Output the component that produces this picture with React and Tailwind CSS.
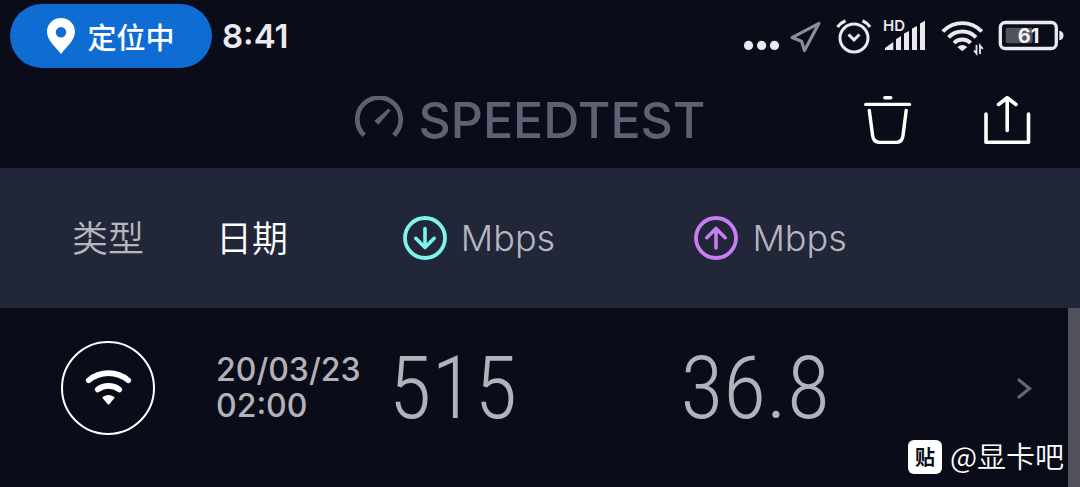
import React from 'react';

const StatusIcon = ({ viewBox, className, label, children }) => (
    <svg viewBox={viewBox} className={`h-9 overflow-visible ${className}`} fill="none" stroke="#e9e9ee" role="img" aria-label={label}>
        {children}
    </svg>
);

const StatusBar = () => (
    <div className="flex h-18 items-center justify-between pr-4 pl-2.5">
        <div className="flex items-center gap-2.5">
            <div className="flex h-16 w-[202px] items-center justify-center gap-3 rounded-full bg-[#0e6cd2] text-white">
                <svg viewBox="0 0 28 36" className="h-9 w-7" fill="#ffffff" aria-hidden="true">
                    <path fillRule="evenodd" d="M14 0C6.200 0 0 6 0 13.800C0 22 7.500 28 14 36C20.500 28 28 22 28 13.800C28 6 21.800 0 14 0ZM14 9A5.200 5.200 0 1 1 14 19.400A5.200 5.200 0 1 1 14 9Z" />
                </svg>
                <span className="font-['Noto_Sans_CJK_SC',sans-serif] text-[29px] leading-9 font-medium">定位中</span>
            </div>
            <time className="text-[33px] leading-10 font-semibold text-[#e9e9ee]">8:41</time>
        </div>

        <div className="flex items-center gap-3">
            <StatusIcon viewBox="742 18 36 36" className="w-9" label="More">
                <g fill="#e9e9ee" stroke="none">
                    <circle cx="748.5" cy="45.400" r="4.600" />
                    <circle cx="761.600" cy="45.400" r="4.600" />
                    <circle cx="774.500" cy="45.400" r="4.600" />
                </g>
            </StatusIcon>
            <StatusIcon viewBox="790 18 34 36" className="w-[34px]" label="Location">
                <path d="M819 23.300L792 37.600L801.500 41.300L804.500 50.500Z" stroke="#8c8c96" strokeWidth="3.200" strokeLinejoin="round" />
            </StatusIcon>
            <StatusIcon viewBox="836 18 34 36" className="w-[34px]" label="Alarm">
                <circle cx="854" cy="38" r="14" strokeWidth="3" />
                <path d="M837.500 27Q840.500 23 845.500 20.800M862.500 20.800Q867.500 23 870 27" strokeWidth="3.200" />
                <path d="M848.500 34.500L854 39.800L859.500 34.500" strokeWidth="3" />
            </StatusIcon>
            <StatusIcon viewBox="882 18 46 36" className="w-[46px]" label="Signal">
                <text x="883" y="31" fontSize="15" fontWeight="600" fill="#e9e9ee" stroke="none">HD</text>
                <path d="M885 50V48L893.300 42V50ZM896 50V39.300L901 36V50ZM904 50V33.500L909 31V50ZM912 50V28.500L917 26V50ZM920 50V23.500L925 20.800V50Z" fill="#e9e9ee" stroke="none" />
            </StatusIcon>
            <StatusIcon viewBox="940 18 46 36" className="w-[46px]" label="Wi-Fi">
                <path d="M942.800 31.500A27 27 0 0 1 981.800 31.500M948.500 37.400A19 19 0 0 1 976 37.400M954 43A11.500 11.500 0 0 1 970.600 43" strokeWidth="3.900" />
                <path d="M957.300 47Q962.300 43 967.300 47L962.300 51.300Z" fill="#e9e9ee" stroke="none" />
                <path d="M976.500 45V53.500L974 50.500M980 54V45.500L982.800 49" strokeWidth="1.800" />
            </StatusIcon>
            <StatusIcon viewBox="998 18 66 36" className="w-[66px]" label="Battery">
                <rect x="1000.300" y="22.500" width="56" height="26" rx="5" strokeWidth="3.300" />
                <rect x="1005.700" y="27.700" width="27" height="15.600" rx="2" fill="#52525d" stroke="none" />
                <path d="M1059.300 30.700Q1063.500 31.500 1063.500 35.500Q1063.500 39.500 1059.300 40.300Z" fill="#e9e9ee" stroke="none" />
                <text x="1028.500" y="43" fontSize="20" fontWeight="700" textAnchor="middle" fill="#f2f2f5" stroke="none">61</text>
            </StatusIcon>
        </div>
    </div>
);

const Header = () => (
    <header className="grid h-24 grid-cols-[1fr_auto_1fr] items-center pr-12 pl-7">
        <h1 className="col-start-2 flex items-center gap-4 text-[50px] leading-12 font-medium text-[#5f6073]">
            <svg viewBox="355 96 48 48" className="size-12" fill="none" aria-hidden="true">
                <path d="M364.200 135.200A21.700 21.700 0 1 1 393.800 135.200" stroke="#5f6073" strokeWidth="4.700" />
                <path d="M388.500 108.500L390.600 110.600L378.400 124.700L374.200 120.900Z" fill="#5f6073" />
            </svg>
            SPEEDTEST
        </h1>
        <div className="flex justify-end gap-18">
            <button type="button" aria-label="Delete">
                <svg viewBox="864 96 48 48" className="size-12" fill="none" stroke="#ffffff" strokeWidth="3.400" strokeLinecap="round">
                    <path d="M884.800 97.700H890.800M865.700 104.400H909.500" />
                    <path d="M869.300 110.500L872.600 135.500Q873.500 142.400 880 142.400H896Q902.200 142.400 903 135.500L906.200 110.500" />
                </svg>
            </button>
            <button type="button" aria-label="Share">
                <svg viewBox="984 96 48 48" className="size-12" fill="none" stroke="#ffffff" strokeWidth="3.600" strokeLinecap="round" strokeLinejoin="round">
                    <path d="M986 114V142.300H1028.500V114" />
                    <path d="M1007.200 98V130.500M998.500 104.500L1007.200 97.800L1016 104.500" />
                </svg>
            </button>
        </div>
    </header>
);

const SpeedHeading = ({ up }) => (
    <div className="flex items-center gap-3.5 pl-3.5">
        <svg viewBox="0 0 44 44" className="size-11" fill="none" stroke={up ? '#c77df3' : '#7df5ea'} strokeLinecap="round" strokeLinejoin="round" role="img" aria-label={up ? 'Upload' : 'Download'}>
            <circle cx="22" cy="22" r="20" strokeWidth="3.800" />
            <path d={up ? 'M22 32V12.500M12.800 21.700L22 12.500L31.200 21.700' : 'M22 12.500V31.500M12.800 22.300L22 31.500L31.200 22.300'} strokeWidth="3.600" />
        </svg>
        <span className="text-4xl font-light">Mbps</span>
    </div>
);

const results = [
    { day: '20/03/23', time: '02:00', download: '515', upload: '36.8' },
];

const ResultsTable = () => (
    <table className="w-full table-fixed text-left">
        <thead className="bg-[#222639] text-[#b5b6bf]">
            <tr className="h-35 font-['Noto_Sans_CJK_SC',sans-serif] text-4xl">
                <th className="w-[20%] pb-1 pl-18 font-[350]">类型</th>
                <th className="w-[16%] pb-1 font-[350] text-white">日期</th>
                <th className="w-[27%] font-[Inter,sans-serif]"><SpeedHeading /></th>
                <th className="font-[Inter,sans-serif]"><SpeedHeading up /></th>
                <th className="w-[8%]" aria-label="Details"></th>
            </tr>
        </thead>
        <tbody className="text-[#b2b2ba]">
            {results.map((result) => (
                <tr key={result.day} className="h-40">
                    <td className="pl-15">
                        <svg viewBox="60 340 96 96" className="size-24" fill="none" stroke="#ffffff" role="img" aria-label="Wi-Fi">
                            <circle cx="108" cy="388" r="46" strokeWidth="2" />
                            <path d="M88.700 380.300A31 31 0 0 1 128.300 380.300M97.700 389.500A18 18 0 0 1 119.300 389.500" strokeWidth="5.600" strokeLinecap="round" />
                            <path d="M103.500 397.500Q108.500 394.500 113.500 397.500L108.500 403.500Z" fill="#ffffff" strokeWidth="2" strokeLinejoin="round" />
                        </svg>
                    </td>
                    <td className="text-[32px] leading-9 font-medium">
                        {result.day}
                        <br />
                        {result.time}
                    </td>
                    <td className="font-['Roboto_Condensed',Roboto,sans-serif] text-[88px] leading-24 font-light">{result.download}</td>
                    <td className="font-['Roboto_Condensed',Roboto,sans-serif] text-[88px] leading-24 font-light">{result.upload}</td>
                    <td className="pr-12">
                        <button type="button" aria-label="Open result" className="ml-auto block">
                            <svg viewBox="0 0 16 24" className="h-6 w-4" fill="none" stroke="#646577" strokeWidth="3.200" strokeLinecap="round">
                                <path d="M3 4L13.500 12.500L3 21" />
                            </svg>
                        </button>
                    </td>
                </tr>
            ))}
        </tbody>
    </table>
);

const App = () => (
    <div className="relative min-h-screen overflow-hidden bg-[#0a0c1a] font-[Inter,sans-serif]">
        <StatusBar />
        <Header />
        <main>
            <ResultsTable />
        </main>
        <div className="absolute top-77 right-0 bottom-0 w-3 bg-[#52525c]"></div>
        <div className="absolute right-4 bottom-3 flex items-center gap-2 font-['Noto_Sans_CJK_SC',sans-serif] text-white">
            <span className="flex size-[34px] items-center justify-center rounded-md bg-white text-xl leading-5 font-bold text-[#0a0c1a]">贴</span>
            <span className="pb-1 text-[29px] leading-8 font-[350]">@显卡吧</span>
        </div>
    </div>
);

export default App;
